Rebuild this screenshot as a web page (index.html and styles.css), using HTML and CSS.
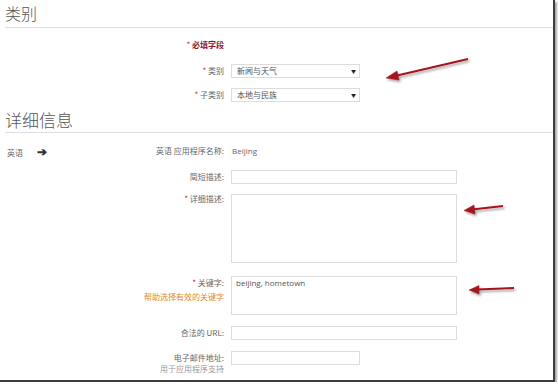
FILE: index.html
```html
<!DOCTYPE html>
<html lang="zh-CN">
<head>
    <meta charset="UTF-8">
    <title>类别 - 详细信息</title>
    <link rel="stylesheet" href="styles.css">
</head>
<body>
    <div class="page">
        <h2 class="section-title">类别</h2>
        <div class="row row-required">
            <div class="label"><span class="star">*</span> <b class="required">必填字段</b></div>
        </div>
        <div class="row row-cat">
            <div class="label"><span class="star">*</span> 类别</div>
            <div class="select">新闻与天气<span class="caret">&#9660;</span></div>
        </div>
        <div class="row row-sub">
            <div class="label"><span class="star">*</span> 子类别</div>
            <div class="select">本地与民族<span class="caret">&#9660;</span></div>
        </div>

        <h2 class="section-title second">详细信息</h2>
        <div class="row row-name">
            <div class="label label-lang">
                <span class="lang">英语 <span class="lang-arrow">&#10132;</span></span>
                <span>英语 应用程序名称:</span>
            </div>
            <div class="value">Beijing</div>
        </div>
        <div class="row row-short">
            <div class="label">简短描述:</div>
            <div class="input wide"></div>
        </div>
        <div class="row row-desc">
            <div class="label"><span class="star">*</span> 详细描述:</div>
            <div class="input wide area-big"></div>
        </div>
        <div class="row row-keys">
            <div class="label">
                <div><span class="star">*</span> 关键字:</div>
                <div class="hint-orange">帮助选择有效的关键字</div>
            </div>
            <div class="input wide area-small">beijing, hometown</div>
        </div>
        <div class="row row-url">
            <div class="label">合法的 URL:</div>
            <div class="input wide"></div>
        </div>
        <div class="row row-mail">
            <div class="label">
                <div>电子邮件地址:</div>
                <div class="hint-gray">用于应用程序支持</div>
            </div>
            <div class="input narrow"></div>
        </div>

        <!-- стрелки-пометки поверх формы -->
        <svg class="marks" width="553" height="380" viewBox="0 0 553 380">
            <defs>
                <filter id="shade" x="-20%" y="-50%" width="140%" height="200%">
                    <feDropShadow dx="1.5" dy="2" stdDeviation="1.2" flood-color="#000" flood-opacity="0.35"/>
                </filter>
            </defs>
            <g filter="url(#shade)" fill="#a3141f" stroke="#a3141f">
                <line x1="468" y1="59" x2="395" y2="76" stroke-width="2.2"/>
                <polygon points="386,78 397,71 399,80" stroke-width="0.5"/>
                <line x1="503" y1="206" x2="472" y2="209.5" stroke-width="2.2"/>
                <polygon points="464,210.5 474,205 475,214" stroke-width="0.5"/>
                <line x1="514" y1="288" x2="477" y2="289.5" stroke-width="2.2"/>
                <polygon points="469,290 479,285.5 479,294" stroke-width="0.5"/>
            </g>
        </svg>
    </div>
</body>
</html>
```

FILE: styles.css
```css
body {
    margin: 0;
    padding: 0;
    background-color: #fff;
    font-family: "Noto Sans CJK SC", "Noto Sans", sans-serif;
    color: #666;
}
.page {
    position: relative;
    width: 553px;
    height: 380px;
    background-color: #fff;
    border-right: 2px solid #3c3c3c;
    border-bottom: 2px solid #3c3c3c;
    box-shadow: 2px 2px 2px rgba(0, 0, 0, 0.35);
    overflow: hidden;
}
.section-title {
    margin: 0 0 0 5px;
    padding: 3px 0 4px;
    font-size: 16px;
    line-height: 20px;
    font-weight: 300;
    color: #555;
    border-bottom: 1px solid #ddd;
}
.section-title.second {
    margin-top: 6px;
    padding: 2px 0 2px;
    font-size: 17px;
}
.row {
    display: grid;
    grid-template-columns: 224px auto;
    column-gap: 7px;
    align-items: start;
    font-size: 8px;
    line-height: 14px;
}
.label {
    text-align: right;
    color: #666;
}
.label-lang {
    display: flex;
    justify-content: space-between;
    padding-left: 7px;
}
.lang-arrow {
    margin-left: 12px;
    font-size: 12px;
    color: #333;
    font-weight: bold;
}
.star {
    color: #c0141e;
}
.required {
    color: #8a1538;
}
.select, .input {
    box-sizing: border-box;
    height: 14px;
    border: 1px solid #ddd;
    background-color: #fff;
    color: #555;
    padding-left: 5px;
    line-height: 12px;
}
.select {
    width: 129px;
    display: flex;
    justify-content: space-between;
}
.caret {
    font-size: 5px;
    color: #222;
    padding-right: 3px;
}
.value {
    padding-left: 1px;
    font-family: "Open Sans", sans-serif;
    color: #666;
}
.wide {
    width: 226px;
}
.narrow {
    width: 129px;
}
.area-big {
    height: 69px;
}
.area-small {
    height: 39px;
    padding: 0 4px;
    font-family: "Open Sans", sans-serif;
}
.row-desc .label {
    line-height: 10px;
}
.hint-orange {
    color: #e0892f;
}
.hint-gray {
    color: #999;
    line-height: 8px;
}
.row-required { margin-top: 10px; }
.row-cat { margin-top: 12px; }
.row-sub { margin-top: 10px; }
.row-name { margin-top: 11px; }
.row-short { margin-top: 10px; }
.row-desc { margin-top: 10px; }
.row-keys { margin-top: 13px; }
.row-url { margin-top: 11px; }
.row-mail { margin-top: 11px; }
.marks {
    position: absolute;
    left: 0;
    top: 0;
    pointer-events: none;
}
```
